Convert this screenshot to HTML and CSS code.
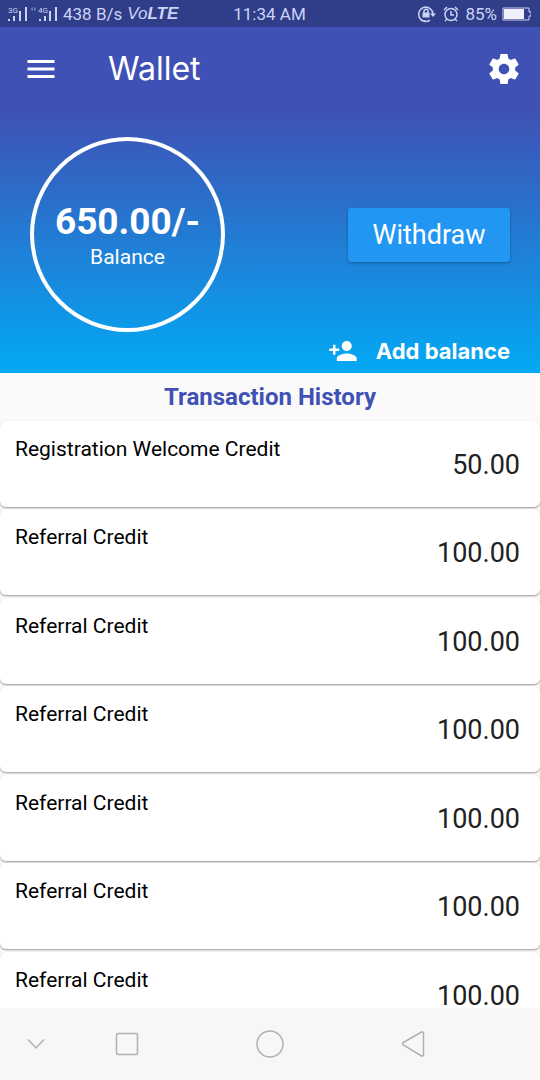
FILE: index.html
```
<!DOCTYPE html>
<html lang="en">
<head>
  <meta charset="UTF-8">
  <meta name="viewport" content="width=device-width, initial-scale=1">
  <title>Wallet</title>
  <link rel="stylesheet" href="styles.css">
</head>
<body>
  <div class="status-bar">
    <div class="status-left">
      <svg class="signal" width="50" height="16" viewBox="0 0 50 16">
        <g fill="currentColor">
          <path d="M0 13h2v2H0zM5 10h2v5H5zM11 5h2v10h-2zM17 1h2v14h-2z"/>
          <path d="M31 13h2v2h-2zM36 10h2v5h-2zM41 5h2v10h-2zM47 1h2v14h-2z"/>
          <path d="M23 2l2-1v4l-2-1zM26 1l2 1v2l-2 1z" opacity=".4"/>
        </g>
        <text x="0" y="7">3G</text>
        <text x="30" y="7">4G</text>
      </svg>
      <span>438 B/s</span>
      <span class="volte">Vo<b>LTE</b></span>
    </div>
    <div class="status-time">11:34 AM</div>
    <div class="status-right">
      <svg width="20" height="18" viewBox="0 0 20 18" fill="none" stroke="currentColor" stroke-width="1.5">
        <path d="M13 15.2A7.2 7.2 0 1 1 16 9M6.8 15.8l3 .6"/>
        <path d="M13 8.5h6l-3 3.5z" fill="currentColor" stroke="none"/>
        <path d="M5.500 7.500h7v5h-7z" fill="currentColor" stroke="none"/>
        <path d="M7 8V6.300a2 2 0 0 1 4 0V8"/>
      </svg>
      <svg width="18" height="18" viewBox="0 0 18 18" fill="none" stroke="currentColor" stroke-width="1.5">
        <circle cx="9" cy="9.5" r="6"/>
        <path d="M9 6v4h3M2 5l3-3M16 5l-3-3M5 14l-2 2M13 14l2 2"/>
      </svg>
      <span>85%</span>
      <svg width="29" height="14" viewBox="0 0 29 14">
        <path d="M1 1h26v4h2v4h-2v4H1z" fill="none" stroke="currentColor"/>
        <path d="M2 2h20v10H2z" fill="#eef0fb"/>
      </svg>
    </div>
  </div>

  <header class="app-bar">
    <button class="icon-button" aria-label="Menu">
      <svg width="36" height="36" viewBox="0 0 24 24"><path d="M3 18h18v-2H3v2zm0-5h18v-2H3v2zm0-7v2h18V6H3z"/></svg>
    </button>
    <h1>Wallet</h1>
    <button class="icon-button" aria-label="Settings">
      <svg width="36" height="36" viewBox="0 0 24 24"><path d="M19.43 12.98c.04-.32.07-.64.07-.98s-.03-.66-.07-.98l2.11-1.65c.19-.15.24-.42.12-.64l-2-3.46c-.12-.22-.39-.3-.61-.22l-2.49 1c-.52-.4-1.08-.73-1.69-.98l-.38-2.65C14.46 2.18 14.25 2 14 2h-4c-.25 0-.46.18-.49.42l-.38 2.65c-.61.25-1.17.59-1.69.98l-2.49-1c-.23-.09-.49 0-.61.22l-2 3.46c-.13.22-.07.49.12.64l2.11 1.65c-.04.32-.07.65-.07.98s.03.66.07.98l-2.11 1.65c-.19.15-.24.42-.12.64l2 3.46c.12.22.39.3.61.22l2.49-1c.52.4 1.08.73 1.69.98l.38 2.65c.03.24.24.42.49.42h4c.25 0 .46-.18.49-.42l.38-2.65c.61-.25 1.17-.59 1.69-.98l2.49 1c.23.09.49 0 .61-.22l2-3.46c.12-.22.07-.49-.12-.64l-2.11-1.65zM12 15.5c-1.93 0-3.5-1.57-3.5-3.5s1.57-3.5 3.5-3.5 3.5 1.57 3.5 3.5-1.57 3.5-3.5 3.5z"/></svg>
    </button>
  </header>

  <section class="summary">
    <div class="summary-row">
      <div class="balance">
        <strong>650.00/-</strong>
        <span>Balance</span>
      </div>
      <button class="btn-withdraw">Withdraw</button>
    </div>
    <a class="add-balance" href="#">
      <svg width="30" height="30" viewBox="0 0 24 24"><path d="M15 12c2.21 0 4-1.79 4-4s-1.79-4-4-4-4 1.79-4 4 1.79 4 4 4zm-9-2V7H4v3H1v2h3v3h2v-3h3v-2H6zm9 4c-2.67 0-8 1.34-8 4v2h16v-2c0-2.66-5.33-4-8-4z"/></svg>
      <span>Add balance</span>
    </a>
  </section>

  <main class="history">
    <h2>Transaction History</h2>
    <ul class="transactions">
      <li><span class="name">Registration Welcome Credit</span><span class="amount">50.00</span></li>
      <li><span class="name">Referral Credit</span><span class="amount">100.00</span></li>
      <li><span class="name">Referral Credit</span><span class="amount">100.00</span></li>
      <li><span class="name">Referral Credit</span><span class="amount">100.00</span></li>
      <li><span class="name">Referral Credit</span><span class="amount">100.00</span></li>
      <li><span class="name">Referral Credit</span><span class="amount">100.00</span></li>
      <li><span class="name">Referral Credit</span><span class="amount">100.00</span></li>
    </ul>
  </main>

  <nav class="nav-bar">
    <button aria-label="Hide navigation">
      <svg width="18" height="12" viewBox="0 0 18 12"><path d="M1 1.5l8 8.500 8-8.500"/></svg>
    </button>
    <button aria-label="Recent apps">
      <svg width="24" height="24" viewBox="0 0 24 24"><rect x="1.5" y="1.5" width="21" height="21" rx="1.5"/></svg>
    </button>
    <button aria-label="Home">
      <svg width="28" height="28" viewBox="0 0 28 28"><circle cx="14" cy="14" r="13"/></svg>
    </button>
    <button aria-label="Back">
      <svg width="24" height="28" viewBox="0 0 24 28"><path d="M20.5 2L2.300 12.500q-1.600 1.200 0 2.400L20.500 26q2 .5 2-1.500v-21q0-2-2-1.500z"/></svg>
    </button>
  </nav>
</body>
</html>
```

FILE: styles.css
```
* {
  box-sizing: border-box;
}
body {
  margin: 0;
  height: 100vh;
  display: flex;
  flex-direction: column;
  font-family: Roboto, sans-serif;
  background: #fafafa;
  color: #000;
}
button {
  padding: 0;
  border: none;
  background: none;
  color: inherit;
  font-family: inherit;
  cursor: pointer;
}
svg {
  display: block;
  flex: none;
}

/* status bar */
.status-bar {
  display: grid;
  grid-template-columns: 1fr auto 1fr;
  align-items: center;
  height: 27px;
  padding: 0 9px 0 8px;
  background: #303d88;
  color: #ccd3f5;
  font-size: 17px;
  white-space: nowrap;
}
.status-left,
.status-right {
  display: flex;
  align-items: center;
  gap: 5px;
}
.status-right {
  justify-content: flex-end;
}
.signal text {
  fill: currentColor;
  font-size: 8px;
}
.volte {
  font-family: "Liberation Sans", sans-serif;
  font-style: italic;
}

/* header */
.app-bar {
  display: flex;
  align-items: center;
  height: 84px;
  padding: 0 18px 0 23px;
  background: #3f51b5;
  color: #fff;
}
.app-bar h1 {
  flex: 1;
  margin: 0 0 0 49px;
  font-family: Inter, sans-serif;
  font-size: 32px;
  font-weight: 400;
  line-height: 34px;
}
.icon-button svg,
.add-balance svg {
  fill: currentColor;
}
.summary {
  padding: 26px 30px 4px;
  background: linear-gradient(#3f51b5, #03a9f4);
  color: #fff;
}
.summary-row {
  display: flex;
  justify-content: space-between;
  align-items: center;
}
.balance {
  display: flex;
  flex-direction: column;
  align-items: center;
  justify-content: center;
  width: 195px;
  height: 195px;
  border: 4px solid #fff;
  border-radius: 50%;
}
.balance strong {
  font-size: 37px;
  line-height: 44px;
}
.balance span {
  font-size: 21px;
  line-height: 26px;
}
.btn-withdraw {
  width: 162px;
  height: 54px;
  border-radius: 3px;
  background: #2196f3;
  font-size: 27px;
  box-shadow: 0 1px 3px rgba(0, 0, 0, 0.3);
}
.add-balance {
  display: flex;
  align-items: center;
  justify-content: flex-end;
  gap: 18px;
  height: 37px;
  color: #fff;
  font-family: Inter, sans-serif;
  font-size: 22px;
  font-weight: 700;
  text-decoration: none;
}

/* transactions */
.history {
  flex: 1;
  min-height: 0;
  overflow: hidden;
}
.history h2 {
  margin: 0;
  color: #3f51b5;
  font-size: 24px;
  line-height: 48px;
  text-align: center;
}
.transactions {
  margin: 0;
  padding: 0;
  list-style: none;
}
.transactions li {
  display: flex;
  justify-content: space-between;
  height: 86px;
  margin-bottom: 2px;
  padding: 15px 20px 13px 15px;
  border-radius: 6px;
  background: #fff;
  box-shadow: 0 1px 2px rgba(0, 0, 0, 0.4);
}
.transactions li:nth-child(even) {
  margin-bottom: 3px;
}
.name {
  font-size: 21px;
  line-height: 26px;
}
.amount {
  align-self: center;
  color: #212121;
  font-size: 27px;
}

/* system navigation */
.nav-bar {
  display: grid;
  grid-template-columns: 72px 110px 1fr 110px 72px;
  height: 72px;
  background: #f7f7f7;
}
.nav-bar button {
  display: flex;
  align-items: center;
  justify-content: center;
}
.nav-bar svg {
  fill: none;
  stroke: #b0b0b0;
  stroke-width: 1.5;
}
```
